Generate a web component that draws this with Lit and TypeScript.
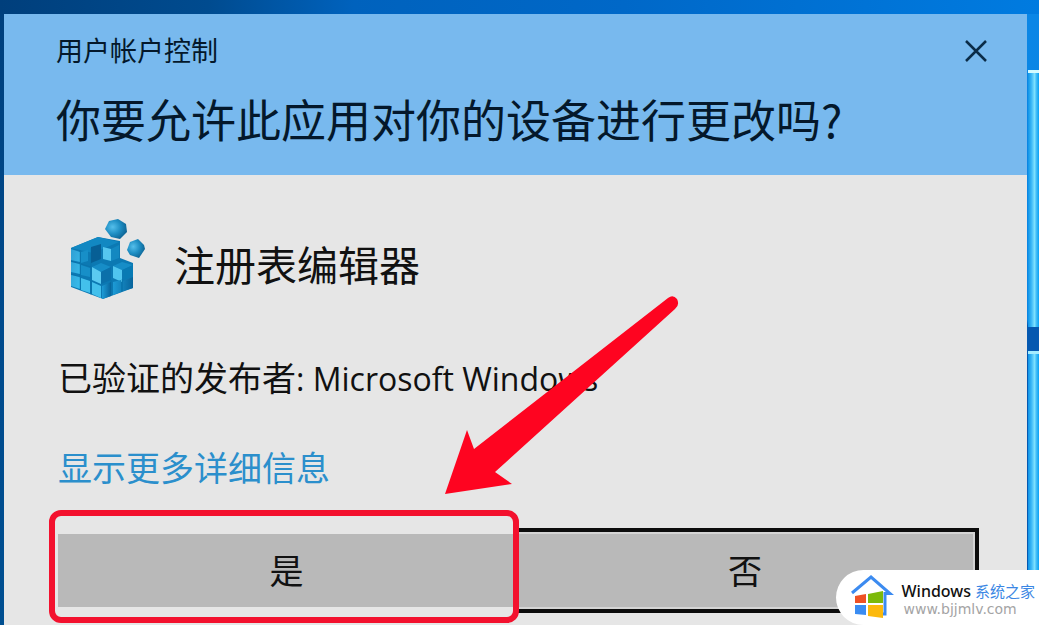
import { LitElement, html, css } from "lit";
import { customElement } from "lit/decorators.js";

@customElement("registry-icon")
class RegistryIcon extends LitElement {
  static styles = css`
    :host { display: block; width: 80px; height: 84px; }
    svg { display: block; width: 100%; height: 100%; }
  `;
  render() {
    return html`<svg viewBox="0 0 80 84" aria-hidden="true">
      <defs>
        <linearGradient id="l" x1="0" y1="0" x2="1" y2="1"><stop offset="0" stop-color="#2f9fd4" /><stop offset="1" stop-color="#39bdec" /></linearGradient>
        <linearGradient id="r" x1="0" y1="0" x2="1" y2="0"><stop offset="0" stop-color="#1d9bd6" /><stop offset="1" stop-color="#08649c" /></linearGradient>
        <radialGradient id="s" cx=".35" cy=".4" r=".7"><stop offset="0" stop-color="#55bfeb" /><stop offset=".5" stop-color="#1f8fc4" /><stop offset="1" stop-color="#0b5f8f" /></radialGradient>
      </defs>
      <path d="M3 29 30 18 52 22V39L65 44V69L35 80 3 68Z" fill="#0c79b3" />
      <path d="M3 29 30 18 51 23 25 34Z" fill="#1288c2" />
      <path d="M3 30 12 33V43L3 41ZM3 43 12 45V55L3 53ZM3 56 12 58V70L3 67Z" fill="url(#l)" />
      <path d="M13 33 20 31V42L13 44ZM13 46 22 49V58L13 56Z" fill="#178fc8" />
      <path d="M23 28 33 25V40L23 44Z" fill="#075f95" />
      <path d="M35 28 43 30V42L35 40Z" fill="#55c6ef" />
      <path d="M43 30 51 26V39L43 42Z" fill="#1388c1" />
      <path d="M24 48 33 44 43 48 33 53Z" fill="#168dc7" />
      <path d="M24 48 33 53V65L24 61Z" fill="#5bcaf1" />
      <path d="M33 53 43 48V61L33 65Z" fill="#0b70aa" />
      <path d="M45 47 54 43 65 46 54 51Z" fill="#168dc7" />
      <path d="M45 47 54 51V63L45 59Z" fill="#50c5ef" />
      <path d="M55 51 65 46V57L55 61Z" fill="#087ab4" />
      <path d="M13 59 22 62V74L13 71ZM24 63 33 67V79L24 75Z" fill="#43c0ec" />
      <path d="M34 67 43 63V77L34 80Z" fill="url(#r)" />
      <path d="M45 63 53 61V73L45 76ZM55 62 65 58V69L55 72Z" fill="url(#r)" />
      <path d="M12 31V71M23 29V76M43 61V77M54 60V73M13 45 23 48M3 42 12 45M3 55 12 58" stroke="#07679d" stroke-opacity=".35" fill="none" />
      <path d="M41 2 50 0 58 5 59 13 52 20 43 18 37 10Z" fill="url(#s)" />
      <path d="M62 23 70 20 76 26 77 30 71 39 62 36 59 31Z" fill="url(#s)" />
    </svg>`;
  }
}

@customElement("site-badge")
class SiteBadge extends LitElement {
  static styles = css`
    :host {
      display: flex;
      align-items: center;
      gap: 8px;
      box-sizing: border-box;
      height: 55px;
      padding: 0 4px 0 14px;
      background: #fff;
      border-radius: 28px 0 0 28px;
      white-space: nowrap;
    }
    svg { flex: none; width: 44px; height: 46px; }
    .text { display: flex; flex-direction: column; }
    .name { display: flex; align-items: baseline; gap: 4px; font: 500 16px/22px "Noto Sans", sans-serif; color: #111; }
    .cn { font: 400 15px/22px "Noto Sans CJK SC", sans-serif; color: #3b87e4; }
    .url { padding-left: 2px; font: 14px/14px "DejaVu Sans", sans-serif; color: #a4a4a4; }
  `;
  render() {
    return html`
      <svg viewBox="0 0 44 46" aria-hidden="true">
        <path d="M2 18 21 2 40 18.500H35V39H30" fill="none" stroke="#3c8bf0" stroke-width="3" />
        <path d="M5 21 16 19V28H5Z" fill="#ef5124" />
        <path d="M18 19 33 16V28H18Z" fill="#7cb90a" />
        <path d="M5 30H16V40L5 39Z" fill="#3a8cf2" />
        <path d="M18 30H33V43L18 41Z" fill="#fcb90c" />
      </svg>
      <div class="text">
        <span class="name"><span>Windows</span><span class="cn">系统之家</span></span>
        <span class="url">www.bjjmlv.com</span>
      </div>`;
  }
}

@customElement("app-root")
class AppRoot extends LitElement {
  static styles = css`
    :host {
      display: grid;
      grid-template-columns: minmax(0, 1fr) 12px;
      position: relative;
      box-sizing: border-box;
      min-height: 100vh;
      padding: 14px 0 0 4px;
      overflow: hidden;
      background:
        linear-gradient(90deg, #003f7c, #004b8f 20%, #0062bd 34%, #0068c8 60%, #007be0) top / 100% 14px no-repeat,
        linear-gradient(#003f7c, #004a8c 50%, #004f91);
      font-family: "Noto Sans CJK SC", sans-serif;
      color: #111;
    }
    .dialog {
      display: flex;
      flex-direction: column;
      background: #e6e6e6;
    }
    header {
      display: flex;
      justify-content: space-between;
      align-items: flex-start;
      box-sizing: border-box;
      height: 161px;
      padding: 16px 38px 0 52px;
      background: #78b9ee;
      color: #04182b;
    }
    .caption { margin: 0; font-size: 27px; line-height: 40px; font-weight: 400; }
    h1 { margin: 17px 0 0; font-size: 45px; line-height: 64px; font-weight: 400; white-space: nowrap; }
    .close {
      display: block;
      width: 26px;
      height: 26px;
      margin-top: 8px;
      padding: 0;
      border: 0;
      background: none;
    }
    .close svg { display: block; width: 26px; height: 26px; }
    main { padding: 44px 48px 12px 54px; }
    .app { display: flex; align-items: center; gap: 26px; padding-left: 10px; }
    h2 { margin: 4px 0 0; font-size: 41px; line-height: 60px; font-weight: 400; }
    .publisher { margin: 50px 0 0; font-size: 34px; line-height: 48px; white-space: nowrap; }
    .latin { font-family: "Open Sans", sans-serif; font-size: 32px; }
    .more {
      display: block;
      width: fit-content;
      margin-top: 40px;
      font-size: 34px;
      line-height: 48px;
      color: #2b8fcc;
      text-decoration: none;
    }
    .actions { display: grid; grid-template-columns: 65fr 66fr; margin-top: 37px; }
    .slot { display: grid; position: relative; height: 85px; }
    .action {
      margin: 6px 0;
      padding: 0 0 2px;
      border: 0;
      background: #b9b9b9;
      color: #111;
      font: 400 34px/48px "Noto Sans CJK SC", sans-serif;
    }
    .action.focused {
      margin: 0;
      border: solid #0c0c0c;
      border-width: 4px 4px 4px 0;
      box-shadow: inset 0 0 0 2px #d4d4d4;
    }
    .highlight {
      position: absolute;
      inset: -18px -4px -10px -9px;
      border: 6px solid #f3112e;
      border-radius: 12px;
      z-index: 1;
    }
    .arrow {
      position: absolute;
      left: 440px;
      top: 290px;
      width: 245px;
      height: 210px;
    }
    .panes { display: flex; flex-direction: column; gap: 24px; padding-top: 56px; background: linear-gradient(#0a86e6, #0b86e2 50%, #0558b0 51%); }
    .pane {
      flex: 1;
      margin-left: 1px;
      background: linear-gradient(90deg, #0f92e6, #39b6f6 30%, #7fe2ff 60%, #45bff8 75%, #0aa0f2);
    }
    .pane:first-child { flex: none; height: 257px; border-top: 3px solid #d3fbff; box-sizing: border-box; }
    .pane:last-child { border-top: 3px solid #a4ecff; }
    site-badge { position: absolute; right: 0; bottom: 0; z-index: 2; }
  `;
  render() {
    return html`
      <section class="dialog" role="dialog" aria-labelledby="question">
        <header>
          <div>
            <p class="caption">用户帐户控制</p>
            <h1 id="question">你要允许此应用对你的设备进行更改吗?</h1>
          </div>
          <button class="close" aria-label="关闭">
            <svg viewBox="0 0 26 26"><path d="M3 3 23 23M23 3 3 23" stroke="#0b2c48" stroke-width="2.500" /></svg>
          </button>
        </header>
        <main>
          <div class="app">
            <registry-icon></registry-icon>
            <h2>注册表编辑器</h2>
          </div>
          <p class="publisher">已验证的发布者<span class="latin">: Microsoft Windows</span></p>
          <a class="more" href="#">显示更多详细信息</a>
          <div class="actions">
            <div class="slot"><button class="action">是</button><span class="highlight"></span></div>
            <div class="slot"><button class="action focused">否</button></div>
          </div>
        </main>
      </section>
      <div class="panes"><div class="pane"></div><div class="pane"></div></div>
      <svg class="arrow" viewBox="0 0 245 210" aria-hidden="true">
        <path d="M5 204 27 140 34 159 228 8Q233 4 237 9 240 15 235 19L55 182 72 194Z" fill="#fe0420" />
      </svg>
      <site-badge></site-badge>
    `;
  }
}
